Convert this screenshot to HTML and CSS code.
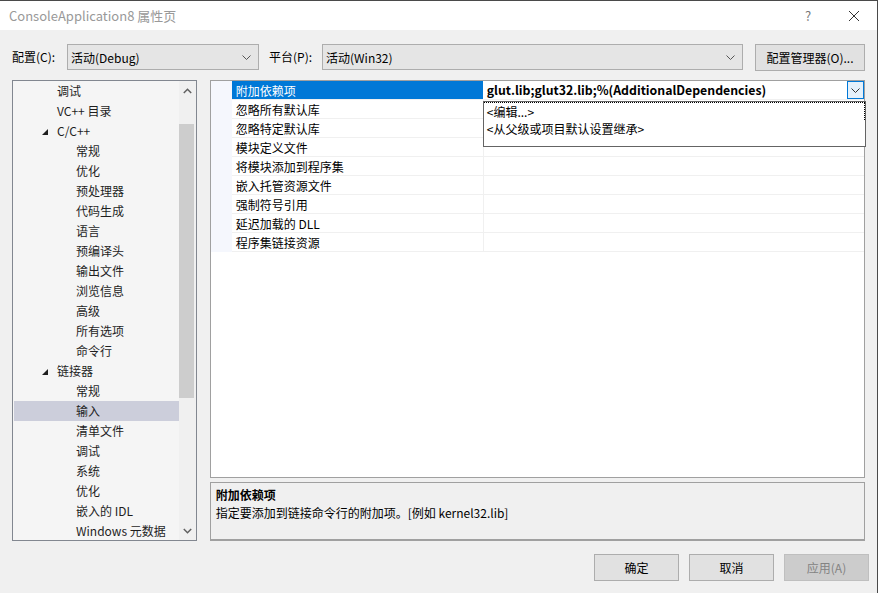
FILE: index.html
```html
<!DOCTYPE html>
<html lang="zh-CN">
<head>
    <meta charset="UTF-8">
    <title>ConsoleApplication8 属性页</title>
    <link rel="stylesheet" href="styles.css">
</head>
<body>
    <section class="dialog">
        <header class="titlebar">
            <span class="titlebar__text">ConsoleApplication8 属性页</span>
            <span class="titlebar__help">?</span>
            <span class="titlebar__close">
                <svg width="12" height="12" viewBox="0 0 12 12"><path d="M1 1 L11 11 M11 1 L1 11" stroke="#333" stroke-width="1" fill="none"/></svg>
            </span>
        </header>

        <div class="toolbar">
            <label class="toolbar__label">配置(C):</label>
            <div class="combo combo--config">
                <span>活动(Debug)</span>
                <svg class="chevron" width="9" height="5" viewBox="0 0 9 5"><path d="M0.5 0.5 L4.5 4.5 L8.5 0.5" stroke="#555" fill="none"/></svg>
            </div>
            <label class="toolbar__label toolbar__label--platform">平台(P):</label>
            <div class="combo combo--platform">
                <span>活动(Win32)</span>
                <svg class="chevron" width="9" height="5" viewBox="0 0 9 5"><path d="M0.5 0.5 L4.5 4.5 L8.5 0.5" stroke="#555" fill="none"/></svg>
            </div>
            <button class="btn btn--manager">配置管理器(O)...</button>
        </div>

        <main class="content">
            <div class="tree">
                <ul class="tree__list">
                    <li class="tree__item">调试</li>
                    <li class="tree__item">VC++ 目录</li>
                    <li class="tree__item tree__item--open">
                        <svg class="tree__arrow" width="6" height="6" viewBox="0 0 6 6"><path d="M6 0 L6 6 L0 6 Z" fill="#1e1e1e"/></svg>C/C++
                    </li>
                    <li class="tree__item tree__item--child">常规</li>
                    <li class="tree__item tree__item--child">优化</li>
                    <li class="tree__item tree__item--child">预处理器</li>
                    <li class="tree__item tree__item--child">代码生成</li>
                    <li class="tree__item tree__item--child">语言</li>
                    <li class="tree__item tree__item--child">预编译头</li>
                    <li class="tree__item tree__item--child">输出文件</li>
                    <li class="tree__item tree__item--child">浏览信息</li>
                    <li class="tree__item tree__item--child">高级</li>
                    <li class="tree__item tree__item--child">所有选项</li>
                    <li class="tree__item tree__item--child">命令行</li>
                    <li class="tree__item tree__item--open">
                        <svg class="tree__arrow" width="6" height="6" viewBox="0 0 6 6"><path d="M6 0 L6 6 L0 6 Z" fill="#1e1e1e"/></svg>链接器
                    </li>
                    <li class="tree__item tree__item--child">常规</li>
                    <li class="tree__item tree__item--child tree__item--selected">输入</li>
                    <li class="tree__item tree__item--child">清单文件</li>
                    <li class="tree__item tree__item--child">调试</li>
                    <li class="tree__item tree__item--child">系统</li>
                    <li class="tree__item tree__item--child">优化</li>
                    <li class="tree__item tree__item--child">嵌入的 IDL</li>
                    <li class="tree__item tree__item--child">Windows 元数据</li>
                </ul>
                <div class="scrollbar">
                    <div class="scrollbar__btn">
                        <svg width="9" height="6" viewBox="0 0 9 6"><path d="M0.8 5 L4.5 1.3 L8.2 5" stroke="#606060" stroke-width="1.5" fill="none"/></svg>
                    </div>
                    <div class="scrollbar__track">
                        <div class="scrollbar__thumb"></div>
                    </div>
                    <div class="scrollbar__btn scrollbar__btn--down">
                        <svg width="9" height="6" viewBox="0 0 9 6"><path d="M0.8 1 L4.5 4.7 L8.2 1" stroke="#606060" stroke-width="1.5" fill="none"/></svg>
                    </div>
                </div>
            </div>

            <div class="props">
                <div class="grid">
                    <div class="grid__row grid__row--active">
                        <div class="grid__gutter"></div>
                        <div class="grid__name">附加依赖项</div>
                        <div class="grid__value">
                            <span>glut.lib;glut32.lib;%(AdditionalDependencies)</span>
                            <span class="grid__drop">
                                <svg width="9" height="5" viewBox="0 0 9 5"><path d="M0.5 0.5 L4.5 4.5 L8.5 0.5" stroke="#333" fill="none"/></svg>
                            </span>
                        </div>
                    </div>
                    <div class="grid__row"><div class="grid__gutter"></div><div class="grid__name">忽略所有默认库</div><div class="grid__value"></div></div>
                    <div class="grid__row"><div class="grid__gutter"></div><div class="grid__name">忽略特定默认库</div><div class="grid__value"></div></div>
                    <div class="grid__row"><div class="grid__gutter"></div><div class="grid__name">模块定义文件</div><div class="grid__value"></div></div>
                    <div class="grid__row"><div class="grid__gutter"></div><div class="grid__name">将模块添加到程序集</div><div class="grid__value"></div></div>
                    <div class="grid__row"><div class="grid__gutter"></div><div class="grid__name">嵌入托管资源文件</div><div class="grid__value"></div></div>
                    <div class="grid__row"><div class="grid__gutter"></div><div class="grid__name">强制符号引用</div><div class="grid__value"></div></div>
                    <div class="grid__row"><div class="grid__gutter"></div><div class="grid__name">延迟加载的 DLL</div><div class="grid__value"></div></div>
                    <div class="grid__row"><div class="grid__gutter"></div><div class="grid__name">程序集链接资源</div><div class="grid__value"></div></div>

                    <ul class="dropdown">
                        <li class="dropdown__item dropdown__item--focus">&lt;编辑...&gt;</li>
                        <li class="dropdown__item">&lt;从父级或项目默认设置继承&gt;</li>
                    </ul>
                </div>
                <div class="desc">
                    <h4 class="desc__title">附加依赖项</h4>
                    <p class="desc__text">指定要添加到链接命令行的附加项。[例如 kernel32.lib]</p>
                </div>
            </div>
        </main>

        <footer class="footer">
            <button class="btn btn--footer">确定</button>
            <button class="btn btn--footer">取消</button>
            <button class="btn btn--footer btn--disabled">应用(A)</button>
        </footer>
    </section>
</body>
</html>
```

FILE: styles.css
```css
* {
    margin: 0;
    padding: 0;
    box-sizing: border-box;
}

body {
    background-color: #f0f0f0;
    font-family: "Segoe UI", "Noto Sans CJK SC", sans-serif;
    font-size: 12px;
    color: #000;
}

.dialog {
    width: 878px;
    height: 593px;
    background-color: #f0f0f0;
    border-top: 1px solid #4a4a4a;
    border-right: 1px solid #4a4a4a;
    display: flex;
    flex-direction: column;
    overflow: hidden;
}

/* title bar */
.titlebar {
    height: 29px;
    background-color: #fff;
    display: flex;
    align-items: center;
    padding-left: 9px;
    flex-shrink: 0;
}

.titlebar__text {
    color: #999;
    font-size: 13px;
    flex: 1;
}

.titlebar__help {
    color: #777;
    font-size: 13px;
    width: 46px;
    text-align: center;
}

.titlebar__close {
    width: 46px;
    display: flex;
    justify-content: center;
}

/* toolbar */
.toolbar {
    height: 50px;
    display: flex;
    align-items: flex-start;
    padding: 14px 0 0 12px;
    flex-shrink: 0;
}

.toolbar__label {
    line-height: 26px;
    width: 55px;
}

.toolbar__label--platform {
    margin-left: 10px;
    width: 53px;
}

.combo {
    height: 26px;
    background-color: #e5e5e5;
    border: 1px solid #adadad;
    display: flex;
    align-items: center;
    justify-content: space-between;
    padding: 0 7px 0 3px;
}

.combo--config {
    width: 192px;
}

.combo--platform {
    width: 421px;
}

.btn {
    font-family: inherit;
    font-size: 12px;
    background-color: #e1e1e1;
    border: 1px solid #adadad;
    color: #000;
}

.btn--manager {
    width: 110px;
    height: 27px;
    margin-left: 12px;
}

/* main */
.content {
    display: flex;
    padding: 0 12px 0 12px;
    height: 461px;
    flex-shrink: 0;
}

.tree {
    width: 185px;
    height: 461px;
    border: 1px solid #828790;
    background-color: #f5f5f5;
    display: flex;
    overflow: hidden;
}

.tree__list {
    list-style: none;
    flex: 1;
    padding-left: 1px;
    color: #1e1e1e;
}

.tree__item {
    height: 20px;
    line-height: 20px;
    padding-left: 43px;
    white-space: nowrap;
    display: flex;
    align-items: center;
}

.tree__item--open {
    padding-left: 28px;
}

.tree__arrow {
    margin-right: 9px;
    margin-top: 1px;
}

.tree__item--child {
    padding-left: 62px;
}

.tree__item--selected {
    background-color: #cccedb;
}

.scrollbar {
    width: 17px;
    background-color: #f0f0f0;
    display: flex;
    flex-direction: column;
}

.scrollbar__btn {
    height: 17px;
    display: flex;
    align-items: center;
    justify-content: center;
    padding-top: 2px;
}

.scrollbar__btn--down {
    padding-top: 0;
    height: 18px;
}

.scrollbar__track {
    flex: 1;
    padding-top: 26px;
    padding-bottom: 124px;
}

.scrollbar__thumb {
    width: 15px;
    height: 274px;
    background-color: #cdcdcd;
}

/* property grid */
.props {
    width: 656px;
    margin-left: 13px;
    display: flex;
    flex-direction: column;
    gap: 4px;
}

.grid {
    position: relative;
    height: 398px;
    background-color: #fff;
    border: 1px solid #a0a0a0;
}

.grid__row {
    display: flex;
    height: 19px;
}

.grid__gutter {
    width: 21px;
    background-color: #f5f7fd;
}

.grid__name {
    width: 252px;
    line-height: 17px;
    padding: 1px 0 0 4px;
    border-bottom: 1px solid #f0f0f0;
    border-right: 1px solid #f0f0f0;
    white-space: nowrap;
}

.grid__value {
    flex: 1;
    border-bottom: 1px solid #f0f0f0;
    display: flex;
    align-items: center;
    justify-content: space-between;
    padding-left: 3px;
}

.grid__row--active .grid__name {
    background-color: #0078d7;
    color: #fff;
    border-right: 1px solid #fff;
}

.grid__row--active .grid__value {
    font-weight: bold;
    font-size: 12.3px;
}

.grid__drop {
    width: 17px;
    height: 18px;
    border: 1px solid #0078d7;
    background-color: #e5f1fb;
    display: flex;
    align-items: center;
    justify-content: center;
}

.dropdown {
    position: absolute;
    left: 272px;
    top: 20px;
    width: 383px;
    height: 46px;
    list-style: none;
    background-color: #fff;
    border: 1px solid #646464;
}

.dropdown__item {
    height: 18px;
    line-height: 18px;
    padding-left: 3px;
    font-size: 12px;
}

.dropdown__item--focus {
    border-top: 1px dotted #000;
    border-right: 1px dotted #000;
    line-height: 17px;
}

/* description */
.desc {
    height: 59px;
    border: 1px solid #a0a0a0;
    border-bottom-width: 2px;
    padding: 3px 5px;
}

.desc__title {
    font-size: 12px;
    font-weight: bold;
    line-height: 18px;
}

.desc__text {
    line-height: 18px;
}

/* footer */
.footer {
    display: flex;
    justify-content: flex-end;
    gap: 10px;
    padding: 13px 8px 0 0;
}

.btn--footer {
    width: 85px;
    height: 27px;
}

.btn--disabled {
    background-color: #cccccc;
    border-color: #bfbfbf;
    color: #838383;
}
```
